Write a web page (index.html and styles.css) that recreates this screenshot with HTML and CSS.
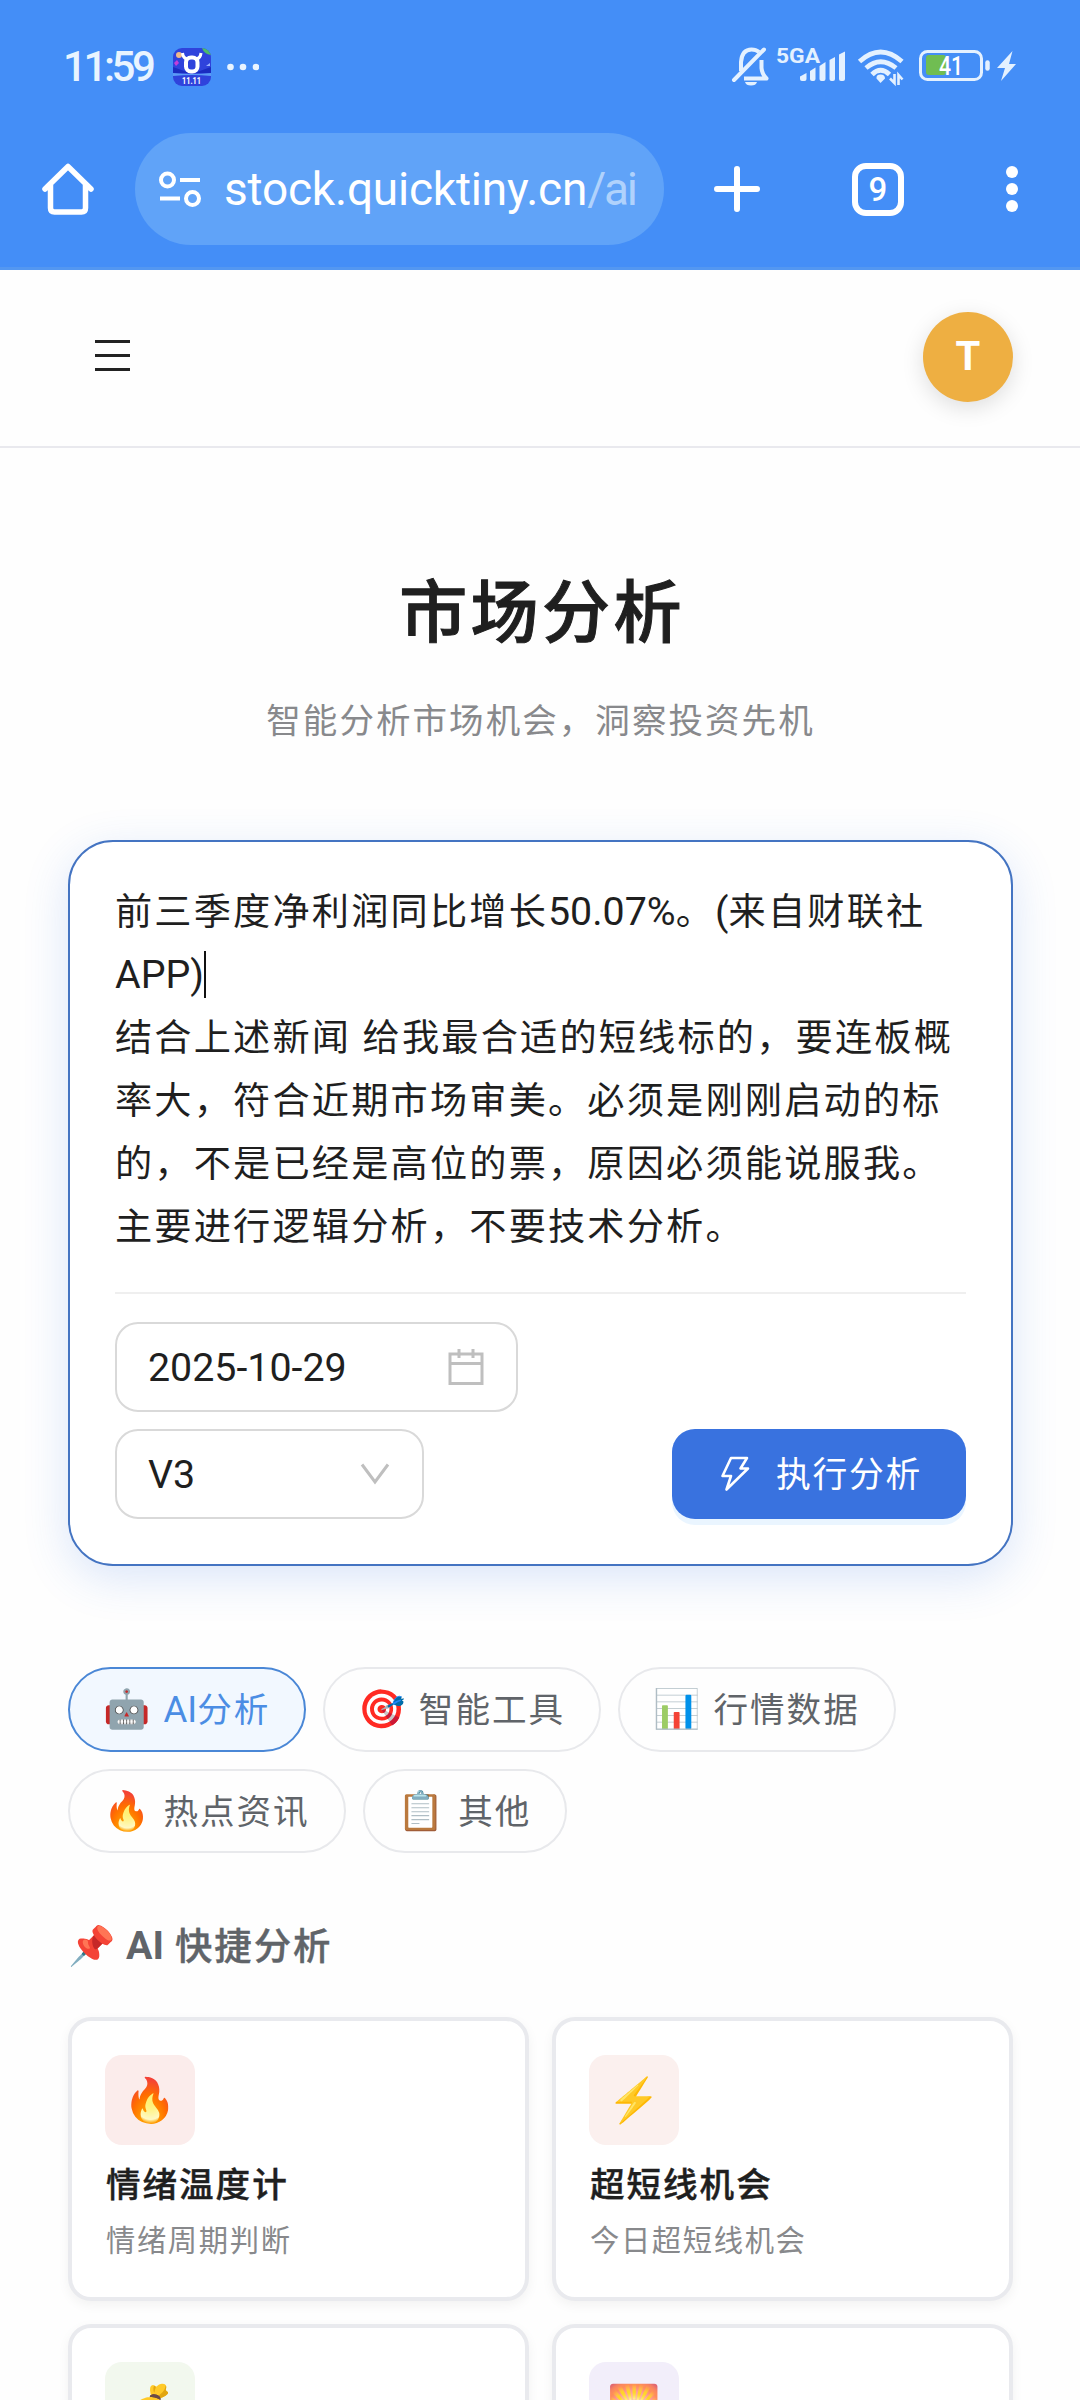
FILE: index.html
```html
<!DOCTYPE html>
<html lang="zh-CN">
<head>
<meta charset="utf-8">
<title>市场分析</title>
<link rel="stylesheet" href="styles.css">
</head>
<body>
<header class="chrome">
  <div class="status">
    <span class="clock">11:59</span>
    <svg class="app" width="38" height="38" viewBox="0 0 38 38">
      <defs><clipPath id="r"><rect width="38" height="38" rx="9"/></clipPath></defs>
      <g clip-path="url(#r)">
        <rect width="38" height="38" fill="#2f43dc"/>
        <path d="M0 19 14 24H24L38 19V25H0Z" fill="#1a2cc0"/>
        <path d="M0 25Q19 27 38 25V28Q19 26 0 28Z" fill="#5b9cf5"/>
        <path d="M29 0H38V7Q31 6 29 0Z" fill="#4dbb6a"/>
        <circle cx="6" cy="7" r="3" fill="#f0b98a"/>
        <path d="M1 15 4 12 6 15 3 18Z" fill="#c23fd8"/>
        <path d="M33 18 37 15V18Z" fill="#9cb4ff"/>
        <path d="M9.500 5Q10 10 14 11M28 5Q27.500 10 23.500 11" stroke="#fff" stroke-width="3" fill="none"/>
        <rect x="13" y="9.500" width="11.500" height="14" rx="5" stroke="#fff" stroke-width="4" fill="none"/>
        <text class="sale" x="9" y="35.500" textLength="19" lengthAdjust="spacingAndGlyphs">11.11</text>
      </g>
    </svg>
    <svg class="more" width="32" height="8" viewBox="0 0 32 8" fill="#e9f4ff"><circle cx="3.500" cy="4" r="3.300"/><circle cx="16" cy="4" r="3.300"/><circle cx="29" cy="4" r="3.300"/></svg>
    <svg class="indicators" width="290" height="50" viewBox="730 42 290 50" fill="none" stroke="#e4f1ff">
      <path d="M734 80 764 49.500" stroke-width="4" stroke-linecap="round"/>
      <path d="M741 71V62Q742 49.500 751.500 49.500 756 49.500 759 52M761.500 60V68Q762 74 766.500 78.500H744" stroke-width="4" stroke-linejoin="round"/>
      <path d="M745 82H757Q756 85.500 751 85.500T745 82Z" fill="#e4f1ff" stroke="none"/>
      <g fill="#e4f1ff" stroke="none">
        <text class="net" x="776" y="63" textLength="44" lengthAdjust="spacingAndGlyphs">5GA</text>
        <path d="M800 76.500 806.500 73V79Q806.500 81 804.500 81H802Q800 81 800 79Z"/>
        <path d="M810 71 815.500 67.500V79Q815.500 81 813.500 81H812Q810 81 810 79Z"/>
        <path d="M819.500 66 825.500 62V79Q825.500 81 823.500 81H821.500Q819.500 81 819.500 79Z"/>
        <path d="M829.500 60 835 57V79Q835 81 833 81H831.500Q829.500 81 829.500 79Z"/>
        <path d="M839 54.500 845 51.500V79Q845 81 843 81H841Q839 81 839 79Z"/>
        <path d="M880.500 83 876.500 78.500Q876 74.500 880.500 74.500T885 78.500Z"/>
      </g>
      <path d="M859.500 61.500Q880.500 42.500 902 61.500M866 68Q880.500 55.500 896 68M872 74.500Q880.500 66 889.500 74.500" stroke-width="4.800"/>
      <path d="M894.500 74V83L890 78.500M898.500 85V75L902.500 79.500" stroke-width="2.600"/>
      <rect x="926" y="55" width="20" height="20" rx="3" fill="#70bd52" stroke="none"/>
      <rect x="920.500" y="51.500" width="61" height="28" rx="7" stroke-width="3"/>
      <path d="M987.500 62.500V68.500" stroke-width="4.500" stroke-linecap="round"/>
      <text class="pct" x="939" y="75" textLength="24" lengthAdjust="spacingAndGlyphs">41</text>
      <path d="M1012.500 51 997 68H1005L1001 81 1016 64H1009Z" fill="#e4f1ff" stroke="none"/>
    </svg>
  </div>
  <div class="toolbar">
    <svg class="home" width="54" height="54" viewBox="0 0 54 54" fill="none" stroke="#fff" stroke-width="5.500" stroke-linejoin="round" stroke-linecap="round"><path d="M4 27 27 4.500 50 27M9.500 23V46Q9.500 50 13.500 50H40.500Q44.500 50 44.500 46V23"/></svg>
    <div class="url">
      <svg width="44" height="38" viewBox="0 0 44 38" fill="none" stroke="#fff" stroke-width="4"><circle cx="9.500" cy="10" r="6.500"/><path d="M22 10H42M2 28.500H22"/><circle cx="34.500" cy="28.500" r="6.500"/></svg>
      <span class="addr">stock.quicktiny.cn<i>/ai</i></span>
    </div>
    <svg class="plus" width="46" height="46" viewBox="0 0 46 46" stroke="#fff" stroke-width="6" stroke-linecap="round"><path d="M23 3V43M3 23H43"/></svg>
    <span class="count">9</span>
    <svg class="dots" width="12" height="48" viewBox="0 0 12 48" fill="#fff"><circle cx="6" cy="7" r="6"/><circle cx="6" cy="24" r="6"/><circle cx="6" cy="41" r="6"/></svg>
  </div>
</header>
<nav class="site">
  <div class="menu"><b></b><b></b><b></b></div>
  <div class="avatar">T</div>
</nav>
<main>
  <h1>市场分析</h1>
  <p class="lead">智能分析市场机会，洞察投资先机</p>
  <section class="ask">
    <div class="prompt">前三季度净利润同比增长<span class="lat">50.07%</span>。<span class="lat">(</span>来自财联社<br><span class="lat">APP)</span><span class="caret"></span><br>结合上述新闻 给我最合适的短线标的，要连板概<br>率大，符合近期市场审美。必须是刚刚启动的标<br>的，不是已经是高位的票，原因必须能说服我。<br>主要进行逻辑分析，不要技术分析。</div>
    <div class="controls">
      <div class="field date">2025-10-29
        <svg width="36" height="38" viewBox="0 0 36 38" fill="none" stroke="#bfbfbf" stroke-width="3"><path d="M2 6H34V35.500H2ZM2 15.500H34M11 1V10M25 1V10"/></svg>
      </div>
      <div class="row">
        <div class="field model">V3
          <svg width="30" height="22" viewBox="0 0 30 22" fill="none" stroke="#bfbfbf" stroke-width="3"><path d="M2 1.500 15 19 28 1.500"/></svg>
        </div>
        <div class="run">
          <svg width="30" height="36" viewBox="0 0 30 36" fill="none" stroke="#fff" stroke-width="2.600" stroke-linejoin="round"><path d="M11 2H27L20.500 12.500H28L6.500 33.500 11 20H2.500Z"/></svg>
          <span class="label">执行分析</span>
        </div>
      </div>
    </div>
  </section>
  <div class="tabs">
    <div class="tab on"><span class="emo">🤖</span><span class="label"><span class="lat">AI</span>分析</span></div>
    <div class="tab"><span class="emo">🎯</span><span class="label">智能工具</span></div>
    <div class="tab"><span class="emo">📊</span><span class="label">行情数据</span></div>
    <div class="tab"><span class="emo">🔥</span><span class="label">热点资讯</span></div>
    <div class="tab"><span class="emo">📋</span><span class="label">其他</span></div>
  </div>
  <h2><span class="emo">📌</span><span class="lat">AI</span><span class="label">快捷分析</span></h2>
  <div class="grid">
    <article><div class="tile fire">🔥</div><h3>情绪温度计</h3><p>情绪周期判断</p></article>
    <article><div class="tile bolt">⚡</div><h3>超短线机会</h3><p>今日超短线机会</p></article>
    <article><div class="tile money">💰</div></article>
    <article><div class="tile sun">🌅</div></article>
  </div>
</main>
</body>
</html>
```
FILE: styles.css
```css
* { box-sizing: border-box; }
html, body { margin: 0; width: 1080px; height: 2400px; overflow: hidden; }
body { background: #fefefe; color: #1f1f1f; font-family: Roboto, "Noto Sans CJK SC", sans-serif; display: flex; flex-direction: column; }
svg { display: block; flex: none; }
h1, h2, h3, p { margin: 0; }

.chrome { height: 270px; background: #448ef7; border-bottom: 3px solid #5397f1; flex: none; }
.status { height: 133px; padding: 0 60px 0 63px; display: flex; align-items: center; color: #e9f4ff; }
.clock { font-size: 42px; font-weight: 500; letter-spacing: -3.400px; width: 110px; white-space: nowrap; }
.app { margin: 0; }
.sale { font: 700 9px Roboto, sans-serif; fill: #fff; }
.more { margin: 0 0 0 16px; }
.indicators { margin-left: auto; }
.net { font: 700 20.500px Roboto, sans-serif; }
.pct { font: 500 25px Roboto, sans-serif; fill: #fff; stroke: none; }
.toolbar { height: 112px; display: flex; align-items: center; padding-left: 41px; }
.url { margin-left: 40px; width: 529px; height: 112px; border-radius: 56px; background: #60a3f8; display: flex; align-items: center; padding-left: 23px; }
.addr { margin-left: 22px; color: #fff; font-size: 46px; letter-spacing: -0.200px; white-space: nowrap; }
.addr i { font-style: normal; letter-spacing: -2.200px; color: #b0d2fc; }
.plus { margin-left: 50px; }
.count { margin-left: 92px; width: 52px; height: 53px; border: 6px solid #fff; border-radius: 14px; color: #fff; font-size: 33px; font-weight: 500; display: flex; align-items: center; justify-content: center; }
.dots { margin-left: 102px; }

.site { height: 178px; border-bottom: 2px solid #e9e9ee; flex: none; display: flex; align-items: center; justify-content: space-between; padding: 0 67px 3px 95px; }
.menu { width: 35px; display: flex; flex-direction: column; gap: 11px; margin-bottom: 3px; }
.menu b { height: 3px; background: #222; }
.avatar { width: 90px; height: 90px; border-radius: 50%; background: #eeaf42; color: #fff; font-size: 40px; font-weight: 700; display: flex; align-items: center; justify-content: center; box-shadow: 0 6px 22px rgba(0,0,0,.13); }

main { flex: none; padding: 111px 67px 0 68px; }
h1 { font-size: 68px; letter-spacing: 3.400px; line-height: 110px; font-weight: 500; text-align: center; text-indent: 3px; -webkit-text-stroke: 1px currentColor; }
.lead { margin-top: 25px; margin-bottom: 92px; text-align: center; font-size: 34.500px; letter-spacing: 2.060px; line-height: 54px; color: #88898c; }

.ask { height: 726px; border: 2px solid #4474c2; border-radius: 45px; background: #fff; padding: 39px 45px 0; box-shadow: 0 12px 45px rgba(55,115,225,.18); }
.prompt { font-size: 37.200px; letter-spacing: 2.175px; line-height: 63px; height: 378px; white-space: nowrap; }
.lat { font-size: 39.375px; letter-spacing: 0; line-height: 1; }
.caret { display: inline-block; width: 2px; height: 47px; background: #111; vertical-align: 0; margin: -10px 0; }
.controls { border-top: 2px solid #efefef; margin-top: 33px; padding-top: 28px; display: flex; flex-direction: column; gap: 17px; }
.row { display: flex; justify-content: space-between; }
.field { height: 90px; border: 2px solid #d9d9d9; border-radius: 23px; font-size: 39.375px; display: flex; align-items: center; justify-content: space-between; padding: 0 32px 0 31px; }
.date { width: 403px; }
.model { width: 309px; }
.run { width: 294px; height: 90px; border-radius: 23px; background: #3972df; color: #fff; font-size: 34.800px; letter-spacing: 1.700px; display: flex; align-items: center; padding-left: 48px; gap: 26px; box-shadow: 0 6px 0 #eaf5ff; white-space: nowrap; }
.label { padding-bottom: 4px; }

.tabs { margin-top: 101px; display: flex; flex-wrap: wrap; gap: 17px; }
.tab { height: 84.500px; border: 2px solid #e8e9ec; border-radius: 43px; padding: 0 34px 0 34px; display: flex; align-items: center; font-size: 34.600px; letter-spacing: 1.960px; color: #606469; white-space: nowrap; }
.tab .lat { font-size: 36.560px; }
.emo, .tile { font-family: "Noto Color Emoji", sans-serif; letter-spacing: 0; }
.emo { width: 60.500px; font-size: 38px; flex: none; margin-left: -1px; }
.on { border-color: #4a87d6; background: #f2f8ff; color: #4b8de4; }
h2 { margin-top: 68px; height: 50px; display: flex; align-items: center; font-size: 37.400px; letter-spacing: 1.975px; font-weight: 500; color: #606469; white-space: nowrap; }
h2 .emo { width: 58px; margin-left: 0; }
h2 .lat { font-weight: 700; width: 49px; }
h2 .label, h3 { -webkit-text-stroke: 0.400px currentColor; }
.grid { margin-top: 46px; display: grid; grid-template-columns: 1fr 1fr; gap: 23px; }
article { height: 284px; border: 4px solid #e9eaee; border-radius: 23px; background: #fff; padding: 34px 33px; box-shadow: 0 4px 12px rgba(0,0,0,.05); }
.tile { width: 90px; height: 90px; border-radius: 17px; font-size: 43px; display: flex; align-items: center; justify-content: center; }
.fire { background: #fbeceb; }
.bolt { background: #fbf0ee; }
.money { background: #f2f8ee; }
.sun { background: #f2eefa; }
h3 { margin-top: 15px; padding-left: 1px; font-size: 34.600px; letter-spacing: 1.960px; line-height: 50px; font-weight: 500; }
article p { margin-top: 9px; padding-left: 1px; font-size: 29.300px; letter-spacing: 1.640px; line-height: 44px; color: #88898c; }
```
